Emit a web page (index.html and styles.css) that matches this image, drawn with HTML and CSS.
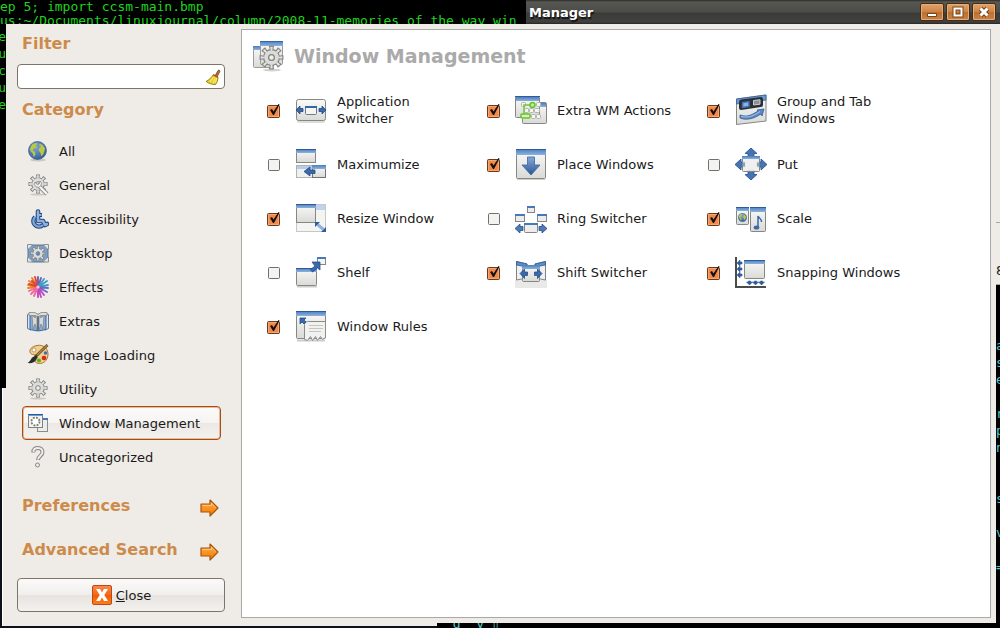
FILE: index.html
```html
<!DOCTYPE html>
<html lang="en">
<head>
    <meta charset="UTF-8">
    <meta name="viewport" content="width=device-width, initial-scale=1.0">
    <title>CompizConfig Settings Manager</title>
    <link rel="stylesheet" href="styles.css">
</head>
<body>
    <!-- Shared gradients and shapes -->
    <svg class="defs" width="0" height="0" aria-hidden="true">
        <defs>
            <linearGradient id="face" x1="0" y1="0" x2="0" y2="1"><stop offset="0" stop-color="#fafaf9"/><stop offset="1" stop-color="#d9d9d6"/></linearGradient>
            <linearGradient id="bar" x1="0" y1="0" x2="0" y2="1"><stop offset="0" stop-color="#4a7ebc"/><stop offset="1" stop-color="#8db2dd"/></linearGradient>
            <linearGradient id="blue" x1="0" y1="0" x2="0" y2="1"><stop offset="0" stop-color="#86a9d6"/><stop offset="1" stop-color="#2a5596"/></linearGradient>
            <linearGradient id="orange" x1="0" y1="0" x2="0" y2="1"><stop offset="0" stop-color="#ffb04a"/><stop offset="1" stop-color="#f57900"/></linearGradient>
            <linearGradient id="red" x1="0" y1="0" x2="0" y2="1"><stop offset="0" stop-color="#f98a50"/><stop offset="0.5" stop-color="#f2661c"/><stop offset="0.5" stop-color="#f45a00"/><stop offset="1" stop-color="#ff7d1a"/></linearGradient>
            <radialGradient id="sea" cx="0.4" cy="0.3" r="0.8"><stop offset="0" stop-color="#7fa8d8"/><stop offset="1" stop-color="#2c5793"/></radialGradient>
        </defs>
        <symbol id="gear" viewBox="0 0 20 20">
            <circle cx="10" cy="10" r="7.6" fill="none" stroke="#80827e" stroke-width="4" pathLength="80" stroke-dasharray="5.6 4.4" stroke-dashoffset="2.8"/>
            <circle cx="10" cy="10" r="6.8" fill="#80827e"/>
            <circle cx="10" cy="10" r="7.2" fill="none" stroke="#e4e5e2" stroke-width="3" pathLength="80" stroke-dasharray="3 7" stroke-dashoffset="1.5"/>
            <circle cx="10" cy="10" r="5.9" fill="#dcddda"/>
            <circle cx="10" cy="10" r="2.3" fill="#eeeeec" stroke="#80827e"/>
        </symbol>
        <symbol id="globe" viewBox="0 0 20 20">
            <circle cx="10" cy="10" r="9.4" fill="url(#sea)" stroke="#2f5688" stroke-width="0.8"/>
            <path d="M3 6l2-3 4-1 1 1-2 2 1 2-3 1-1 2 2 1 1 3-2 3-1-4-2-2-1-2zM12 3l3 1 3 4-1 3-1 3-2 2-1-4-2-2 1-3 2-1-2-1z" fill="#bcc83f"/>
        </symbol>
        <symbol id="next" viewBox="0 0 20 18">
            <path d="M1 5h9V1l8 8-8 8v-4H1z" fill="url(#orange)" stroke="#a8560b" stroke-width="1.2" stroke-linejoin="round"/>
            <path d="M2.5 6.5h9V4l4 4.5" fill="none" stroke="#ffc888" stroke-width="0.9"/>
        </symbol>
    </svg>

    <div class="desktop">
        <header class="titlebar">
            <h1>Manager</h1>
            <div class="window-buttons">
                <button type="button" aria-label="Minimize"><svg viewBox="0 0 14 14"><path d="M2.5 8.500h9v3h-9z" fill="#fff" stroke="#7b4417"/></svg></button>
                <button type="button" aria-label="Maximize"><svg viewBox="0 0 14 14"><path d="M3.500 3.500h7v7h-7z" fill="none" stroke="#7b4417" stroke-width="4"/><path d="M3.500 3.500h7v7h-7z" fill="none" stroke="#fff" stroke-width="2"/></svg></button>
                <button type="button" aria-label="Close window"><svg viewBox="0 0 14 14"><path d="M3.500 3.500l7 7M10.500 3.500l-7 7" stroke="#7b4417" stroke-width="5"/><path d="M3.500 3.500l7 7M10.500 3.500l-7 7" stroke="#fff" stroke-width="3"/></svg></button>
            </div>
        </header>

        <div class="window">
            <aside class="sidebar">
                <label class="heading" for="filter">Filter</label>
                <div class="filter-box">
                    <input type="text" id="filter">
                    <button type="button" class="clear-btn" aria-label="Clear filter">
                        <svg viewBox="0 0 16 16">
                            <path d="M10 7 13 1.500c.6-1 2.300 0 1.800 1L12 8z" fill="#b5733a" stroke="#6b3f16" stroke-width="0.8"/>
                            <path d="M8.500 5.500 13 8c0 3-1 5.500-2.500 7.500C7 15.500 4 14.500 1 12.500c3-1.500 5.500-4 7.500-7z" fill="#e6cf2c" stroke="#8c7a08" stroke-width="0.9"/>
                            <path d="M8.500 8 5 13M10 9l-2 5.500M11.500 9l-1 5" stroke="#fff38a" stroke-width="0.9"/>
                            <path d="M8.500 6 12.700 8.300" stroke="#c33b1c" stroke-width="1.200"/>
                        </svg>
                    </button>
                </div>

                <h2 class="heading category-heading">Category</h2>
                <ul class="category-list">
                    <li><button type="button"><svg viewBox="0 0 22 22"><ellipse cx="11" cy="20" rx="8" ry="1.500" fill="#cbc8c2"/><use href="#globe" x="1" y="1" width="19" height="19"/></svg>All</button></li>
                    <li><button type="button"><svg viewBox="0 0 22 22"><ellipse cx="11" cy="20.500" rx="8" ry="1" fill="#cbc8c2"/><use href="#gear" x="1" y="0" width="20" height="20"/><path d="M10 10l10 10" stroke="#8a8c88" stroke-width="4"/><path d="M10 10l10 10" stroke="#f5f5f4" stroke-width="2.400"/><path d="M8 8a3.500 3.500 0 1 0 5-1l-1 3-2 .500z" fill="#eee" stroke="#8a8c88" stroke-width="0.8"/></svg>General</button></li>
                    <li><button type="button"><svg viewBox="0 0 22 22"><path d="M8 9a5.500 5.500 0 1 0 8 8" fill="none" stroke="#1f4379" stroke-width="4.400"/><path d="M11 3.500V13h5l2 4 2-1" fill="none" stroke="#1f4379" stroke-width="4.600" stroke-linejoin="round" stroke-linecap="round"/><path d="M11 7h4" stroke="#1f4379" stroke-width="4"/><path d="M8 9a5.500 5.500 0 1 0 8 8" fill="none" stroke="#7ea6da" stroke-width="2.400"/><path d="M11 3.500V13h5l2 4 2-1" fill="none" stroke="#8db2e2" stroke-width="2.600" stroke-linejoin="round" stroke-linecap="round"/><path d="M11 7h3.500" stroke="#8db2e2" stroke-width="2"/></svg>Accessibility</button></li>
                    <li><button type="button"><svg viewBox="0 0 22 22"><rect x="1" y="3" width="20" height="17" rx="5" fill="#7f9fc2" stroke="#59748f"/><path d="M.500 7.500v-5h5M16.500 2.500h5v5M21.500 15v5h-5M5.500 20h-5v-5" fill="#e5e5e2" stroke="#8e908c"/><use href="#gear" x="3" y="3.500" width="16" height="16"/><circle cx="11" cy="11.500" r="2" fill="#6486ad"/></svg>Desktop</button></li>
                    <li><button type="button"><svg viewBox="0 0 22 22"><g stroke-width="1.900" stroke-linecap="round"><path d="M11 11 1 9M11 11 2 5M11 11 5 2M11 11 1 12" stroke="#ee8422"/><path d="M11 11 8 1M11 11 5 5M11 11 2 8" stroke="#dc4638"/><path d="M11 11 11 1M11 11 14 2M11 11 13 5" stroke="#7260b6"/><path d="M11 11 17 3M11 11 20 5M11 11 21 9M11 11 17 7" stroke="#3c9ec3"/><path d="M11 11 21 12M11 11 20 16" stroke="#6b68c4"/><path d="M11 11 17 19M11 11 14 21M11 11 11 21" stroke="#c046c4"/><path d="M11 11 7 20M11 11 4 18M11 11 2 15" stroke="#ec6a9c"/></g><circle cx="11" cy="11" r="1.600" fill="#f8c9dc"/></svg>Effects</button></li>
                    <li><button type="button"><svg viewBox="0 0 22 22"><path d="M.500 4.500 4 3v17l-3.500-1.500zM21.500 4.500 18 3v17l3.500-1.500z" fill="#dfe4ea" stroke="#64788e"/><path d="M3 4h7.500v17L3 19.500zM19 4h-7.500v17L19 19.500z" fill="#86ade0" stroke="#3f679f"/><path d="M5 5 8 8l2-4v16l-2-6-2 5zM17 5l-3 3-2-4v16l2-6 2 5z" fill="#d9dad7" stroke="#83857f" stroke-width="0.8"/><path d="M2 2.500h6l3 2 3-2h6v3h-6l-3 1-3-1H2z" fill="#dedfdc" stroke="#838883" stroke-width="0.8"/></svg>Extras</button></li>
                    <li><button type="button"><svg viewBox="0 0 22 22"><path d="M10 1.500c7-1.500 11.500 4 11 9.500-.5 6-5 8.500-8.500 8.500-4 0-5-2-3-4.500 2-3-1-4.500-4-4.500C1 9 2 3 10 1.500z" fill="#f0cf91" stroke="#a9762b"/><circle cx="7" cy="6" r="2" fill="#fff" stroke="#b88a45" stroke-width="0.8"/><circle cx="18.500" cy="9" r="1.800" fill="#3c6fbe"/><circle cx="17" cy="14" r="2.300" fill="#d32a1e"/><circle cx="12" cy="16.500" r="2" fill="#59ad1f"/><path d="M20.500 1 8 13" stroke="#5e4720" stroke-width="2.800"/><path d="M20.500 1 10 11" stroke="#b88b45" stroke-width="1.200"/><path d="M9 11.500 6 13c-2 1-2 4-5.500 6C4 19.500 8 19 9 15.500l1.500-2z" fill="#2b2b2b"/></svg>Image Loading</button></li>
                    <li><button type="button"><svg viewBox="0 0 22 22"><ellipse cx="11" cy="20.500" rx="8" ry="1" fill="#cbc8c2"/><use href="#gear" x="1" y="0" width="20" height="20"/></svg>Utility</button></li>
                    <li><button type="button" class="active"><svg viewBox="0 0 22 22"><rect x="10.500" y="6.500" width="10" height="13" fill="#ececea" stroke="#8b8d89"/><path d="M10 6.500h11M10 7.500h11" stroke="#4477b8"/><rect x="1.500" y="2.500" width="14" height="13" fill="#f2f2f0" stroke="#80827e"/><path d="M1 2.500h15" stroke="#2d589b"/><path d="M1 3.500h15" stroke="#6f9bd0"/><circle cx="8.500" cy="9.500" r="4" fill="#fff" stroke="#777974" stroke-width="1.800" stroke-dasharray="1.900 1.240"/></svg>Window Management</button></li>
                    <li><button type="button"><svg viewBox="0 0 22 22"><path d="M6.500 6.500C6 3 8.500 2 11 2c3 0 4.500 2 4.500 4 0 4-4.500 4-4.500 8" fill="none" stroke="#858782" stroke-width="4"/><path d="M6.500 6C6 3 8.500 2 11 2c3 0 4.500 2 4.500 4 0 4-4.500 4-4.500 7.500" fill="none" stroke="#efefed" stroke-width="2"/><circle cx="10.500" cy="19" r="2" fill="#efefed" stroke="#858782"/></svg>Uncategorized</button></li>
                </ul>

                <button type="button" class="link-row heading">Preferences <svg viewBox="0 0 20 18"><use href="#next"/></svg></button>
                <button type="button" class="link-row heading">Advanced Search <svg viewBox="0 0 20 18"><use href="#next"/></svg></button>

                <button type="button" class="close-btn">
                    <svg viewBox="0 0 22 22"><rect x="1.500" y="1.500" width="19" height="19" rx="1.500" fill="url(#red)" stroke="#bd4a12"/><path d="M5 5h4l2 3.500L13 5h4l-3.700 6 3.700 6h-4l-2-3.500L9 17H5l3.700-6z" fill="#fff"/></svg>
                    <span><u>C</u>lose</span>
                </button>
            </aside>

            <main class="panel">
                <div class="panel-header">
                    <svg viewBox="0 0 32 32">
                        <rect x=".500" y="6.500" width="20" height="21" rx="1" fill="url(#face)" stroke="#9b9d99"/><path d="M0 6h20v4H0z" fill="url(#bar)"/>
                        <rect x="7.500" y="1.500" width="22" height="23" rx="1" fill="url(#face)" stroke="#9b9d99"/><path d="M7 1h23v5H7z" fill="url(#bar)"/><path d="M7 1.500h23" stroke="#3465a4"/>
                        <ellipse cx="19" cy="30" rx="9" ry="1.500" fill="#d3d3d1"/><use href="#gear" x="6" y="5" width="25" height="25"/>
                    </svg>
                    <h2>Window Management</h2>
                </div>

                <div class="plugin-grid">
                    <div class="plugin">
                        <input type="checkbox" id="switcher" checked>
                        <label for="switcher">
                            <svg viewBox="0 0 32 32"><rect x="2" y="25" width="28" height="4" rx="2" fill="#ddd"/><rect x="1.500" y="5.500" width="29" height="21" rx="2" fill="url(#face)" stroke="#858782"/><rect x="10.500" y="12.500" width="11" height="8" rx="1" fill="#f4f4f3" stroke="#6c7a8c"/><path d="M10 13h12" stroke="#3465a4" stroke-width="2"/><path d="M1 16l4-4v2.500h3v3H5V20zM31 16l-4-4v2.500h-3v3h3V20z" fill="#3c69a8" stroke="#204a87" stroke-width="0.8"/></svg>
                            <span>Application Switcher</span>
                        </label>
                    </div>
                    <div class="plugin">
                        <input type="checkbox" id="extrawm" checked>
                        <label for="extrawm">
                            <svg viewBox="0 0 32 32"><rect x="7.500" y="8.500" width="24" height="21" rx="1" fill="url(#face)" stroke="#858782"/><path d="M8 9h23v4H8z" fill="url(#bar)"/><rect x=".500" y="2.500" width="24" height="21" rx="1" fill="url(#face)" stroke="#858782"/><path d="M1 3h23v4H1z" fill="url(#bar)"/><path d="M0 2.500h25" stroke="#2f5b9c"/><path d="M7 22h19v3H7z" fill="#e8e8e6"/><g fill="#f5f5f4" stroke="#b1b3ae"><rect x="6.500" y="8.500" width="4" height="4" rx="1"/><rect x="21.500" y="8.500" width="4" height="4" rx="1"/><rect x="9.500" y="14.500" width="4" height="4" rx="1"/><rect x="14.500" y="14.500" width="4" height="4" rx="1"/><rect x="19.500" y="14.500" width="5" height="4" rx="1"/><rect x="16.500" y="20.500" width="4" height="4" rx="1"/><rect x="21.500" y="20.500" width="4" height="4" rx="1"/></g><path d="M9 20v-9h8" fill="none" stroke="#73c83b" stroke-width="1.500"/><rect x="6" y="20" width="9" height="4" rx="1" fill="#d2f5b5" stroke="#69c12f" stroke-width="1.500"/><circle cx="17.500" cy="11" r="2.500" fill="#b9ed90" stroke="#69c12f" stroke-width="1.500"/></svg>
                            <span>Extra WM Actions</span>
                        </label>
                    </div>
                    <div class="plugin">
                        <input type="checkbox" id="group" checked>
                        <label for="group">
                            <svg viewBox="0 0 32 32"><path d="M1.500 5 31 1v26L1.500 30.500z" fill="url(#face)" stroke="#858782"/><path d="M1.500 5 31 1v5L1.500 10z" fill="#6d9ad0" stroke="#31609f" stroke-width="0.8"/><path d="M6 5.500 26 3q2 0 2 2v6q0 2-2 2L6 16q-2 0-2-2V8q0-2 2-2.500z" fill="#2b3038"/><path d="M7.500 8.500 14 7.500v5l-6.500 1z" fill="#8db2dd" stroke="#3c70b1" stroke-width="1.500"/><path d="M18.500 6.500 25 5.700v4.500l-6.500.8z" fill="#8b9199" stroke="#c9ccd0"/><path d="M5 21c8 3 13-1 18-4l-1-1 7-1-2 7-1-2c-6 4-14 7-21 4z" fill="#5c88c4" stroke="#2f5b9c" stroke-width="0.8"/><path d="M6 22.500c9 2 14-2 19-5" fill="none" stroke="#a6c5ea"/></svg>
                            <span>Group and Tab Windows</span>
                        </label>
                    </div>
                    <div class="plugin">
                        <input type="checkbox" id="maximumize">
                        <label for="maximumize">
                            <svg viewBox="0 0 32 32"><rect x="1.500" y="1.500" width="19" height="13" fill="url(#face)" stroke="#858782"/><path d="M1 1h20v4H1z" fill="url(#bar)"/><path d="M1 1.500h20" stroke="#2f5b9c"/><rect x="1.500" y="17.500" width="29" height="12" fill="#f0f0ef" stroke="#b1b3b0"/><path d="M2 18h15v3H2z" fill="#b5cdea"/><rect x="17.500" y="17.500" width="13" height="12" fill="url(#face)" stroke="#71737a"/><path d="M17 17h14v4H17z" fill="url(#bar)"/><path d="M9 23.500 15 19v3h5v3.500h-5V28z" fill="#3a68a9" stroke="#234a85" stroke-width="0.8"/></svg>
                            <span>Maximumize</span>
                        </label>
                    </div>
                    <div class="plugin">
                        <input type="checkbox" id="place" checked>
                        <label for="place">
                            <svg viewBox="0 0 32 32"><path d="M2 31.500h28" stroke="#ccc"/><rect x="1.500" y="1.500" width="29" height="29" rx="1" fill="url(#face)" stroke="#858782"/><path d="M1 1h30v6H1z" fill="url(#bar)"/><path d="M1 1.500h30" stroke="#2f5b9c"/><path d="M12.500 9v8H7l9 10 9-10h-5.500V9z" fill="url(#blue)" stroke="#3a649f" stroke-width="0.8"/></svg>
                            <span>Place Windows</span>
                        </label>
                    </div>
                    <div class="plugin">
                        <input type="checkbox" id="put">
                        <label for="put">
                            <svg viewBox="0 0 32 32"><path d="M16 0l6 5.500h-3V9h-6V5.500h-3zM16 32l6-5.500h-3V22h-6v4.500h-3zM0 16.500 6 11v3h4v5H6v3zM32 16.500 26 11v3h-4v5h4v3z" fill="#4673b1" stroke="#234e8a" stroke-width="0.8"/><rect x="7.500" y="8.500" width="17" height="15" rx="1" fill="#eeeeed" fill-opacity="0.900" stroke="#858782"/><path d="M7 8h18v3H7z" fill="url(#bar)"/><path d="M8 14.500h2v4H8zM22 14.500h2v4h-2z" fill="#7fa2cf"/></svg>
                            <span>Put</span>
                        </label>
                    </div>
                    <div class="plugin">
                        <input type="checkbox" id="resize" checked>
                        <label for="resize">
                            <svg viewBox="0 0 32 32"><rect x="1.500" y="2.500" width="29" height="27" fill="#f4f4f3" stroke="#c6c8c4"/><path d="M2 3h28v5H2z" fill="#bdd3ee"/><rect x="1.500" y="2.500" width="19" height="18" fill="url(#face)" stroke="#858782"/><path d="M1 2h20v4H1z" fill="url(#bar)"/><path d="M1 2.500h20" stroke="#2f5b9c"/><path d="M22.500 22.500l6 5" stroke="#8fb0da" stroke-width="3"/><path d="M20 20h5l-5 5zM31 30v-5l-5 5z" fill="#2f5b9c"/></svg>
                            <span>Resize Window</span>
                        </label>
                    </div>
                    <div class="plugin">
                        <input type="checkbox" id="ring">
                        <label for="ring">
                            <svg viewBox="0 0 32 32"><g fill="#ececea" stroke="#858782"><rect x="12.500" y="4.500" width="7" height="6"/><rect x=".500" y="12.500" width="9" height="7"/><rect x="22.500" y="12.500" width="9" height="7"/><rect x="9.500" y="21.500" width="13" height="9" rx="1"/></g><path d="M12 5h8M0 13h10M22 13h10M9 22h14" stroke="#4679ba" stroke-width="2"/><path d="M0 26.500 5 22v2.500h3v4H5V31zM32 26.500 27 22v2.500h-3v4h3V31z" fill="#4f7bb7" stroke="#234e8a" stroke-width="0.8"/></svg>
                            <span>Ring Switcher</span>
                        </label>
                    </div>
                    <div class="plugin">
                        <input type="checkbox" id="scale" checked>
                        <label for="scale">
                            <svg viewBox="0 0 32 32"><rect x="1.500" y="5.500" width="12" height="17" rx="1" fill="url(#face)" stroke="#858782"/><path d="M1 5h13v4H1z" fill="url(#bar)"/><use href="#globe" x="3" y="11" width="9" height="9"/><rect x="15.500" y="5.500" width="15" height="24" rx="1" fill="url(#face)" stroke="#858782"/><path d="M15 5h16v5H15z" fill="url(#bar)"/><path d="M1 5.500h13M15 5.500h16" stroke="#2f5b9c"/><path d="M23 25V14c1 3 4 2.500 3.500 6" fill="none" stroke="#3a68a9" stroke-width="1.500"/><ellipse cx="21.500" cy="25.500" rx="2.800" ry="2" fill="#3a68a9"/></svg>
                            <span>Scale</span>
                        </label>
                    </div>
                    <div class="plugin">
                        <input type="checkbox" id="shelf">
                        <label for="shelf">
                            <svg viewBox="0 0 32 32"><path d="M2 30.500h20" stroke="#ccc" stroke-width="2"/><rect x="1.500" y="12.500" width="20" height="17" rx="1" fill="url(#face)" stroke="#858782"/><path d="M1 12h21v4H1z" fill="url(#bar)"/><path d="M1 12.500h21" stroke="#2f5b9c"/><rect x="22.500" y="1.500" width="8" height="7" fill="#f4f4f3" stroke="#858782"/><path d="M22 2h9" stroke="#4679ba" stroke-width="2"/><path d="M25 6v8l-2.500-2-5 4-2-2.500 4.500-3.500-3-4z" fill="#3a68a9" stroke="#234e8a" stroke-width="0.8"/></svg>
                            <span>Shelf</span>
                        </label>
                    </div>
                    <div class="plugin">
                        <input type="checkbox" id="shift" checked>
                        <label for="shift">
                            <svg viewBox="0 0 32 32"><path d="M0 24h32v8H0z" fill="#e9e9e8"/><path d="M1.500 5.500 12 8v14L1.500 24zM30.500 5.500 20 8v14l10.500 2z" fill="#f0f0ef" stroke="#7d8187"/><path d="M1.500 5.500 12 8v3L1.500 9zM30.500 5.500 20 8v3l10.500-2z" fill="#5d8cc8" stroke="#2f5b9c" stroke-width="0.8"/><rect x="7.500" y="9.500" width="17" height="16" rx="1" fill="url(#face)" stroke="#858782"/><path d="M7 9h18v4H7z" fill="url(#bar)"/><path d="M5 17.500 9.500 13v3h3v3.500h-3v3zM27 17.500 22.500 13v3h-3v3.500h3v3z" fill="#3a68a9" stroke="#234e8a" stroke-width="0.8"/></svg>
                            <span>Shift Switcher</span>
                        </label>
                    </div>
                    <div class="plugin">
                        <input type="checkbox" id="snap" checked>
                        <label for="snap">
                            <svg viewBox="0 0 32 32"><path d="M1 1v30h30" fill="none" stroke="#4a4c49" stroke-width="2"/><rect x="9.500" y="4.500" width="20" height="18" rx="1" fill="url(#face)" stroke="#858782"/><path d="M9 4h21v4H9z" fill="url(#bar)"/><path d="M9 4.500h21" stroke="#2f5b9c"/><path d="M2 7l3-3v2h2v2H5v2zM2 13l3-3v2h2v2H5v2zM2 19l3-3v2h2v2H5v2zM14.500 29l-3-3h2v-1h2v1h2zM20.500 29l-3-3h2v-1h2v1h2zM26.500 29l-3-3h2v-1h2v1h2z" fill="#2f5b9c" stroke="#2f5b9c" stroke-width="0.6"/></svg>
                            <span>Snapping Windows</span>
                        </label>
                    </div>
                    <div class="plugin">
                        <input type="checkbox" id="rules" checked>
                        <label for="rules">
                            <svg viewBox="0 0 32 32"><path d="M2 30.500h28" stroke="#ccc" stroke-width="2"/><rect x="1.500" y="1.500" width="29" height="27" rx="1" fill="url(#face)" stroke="#858782"/><path d="M1 1h30v5H1z" fill="url(#bar)"/><path d="M1 1.500h30" stroke="#2f5b9c"/><path d="M9.500 29.500v-15q0-3 3-3h18v16l-3 2-2-3-3 4-2-4-3 4-2-4-3 4z" fill="#f1f1ef" stroke="#8b8d89"/><path d="M14 15.500h14M14 18.500h14M14 21.500h12" stroke="#c5c6c2"/><path d="M5 8h6l-2 2 2 2-2 2-2-2-2 2z" fill="#3a68a9" stroke="#234e8a" stroke-width="0.8"/></svg>
                            <span>Window Rules</span>
                        </label>
                    </div>
                </div>
            </main>
        </div>

        <!-- Terminals and windows peeking out around the edges -->
        <pre class="terminal terminal-top">ep 5; import ccsm-main.bmp
us:~/Documents/linuxjournal/column/2008-11-memories of the way win</pre>
        <pre class="terminal terminal-left">e
u
c
u
e</pre>
        <pre class="terminal terminal-right">a
s
e

r
p
n


s

v

=</pre>
        <pre class="terminal terminal-bottom">  g  y ▯</pre>
        <div class="other-window">8</div>
    </div>
</body>
</html>
```
FILE: styles.css
```css
/* General Styles */
* {
    margin: 0;
    padding: 0;
    box-sizing: border-box;
}

body {
    font-family: 'DejaVu Sans', sans-serif;
    font-size: 13px;
    line-height: 17px;
    color: #1a1a1a;
}

button {
    font: inherit;
    color: inherit;
    border: none;
    background: none;
    cursor: pointer;
}

svg {
    display: block;
    flex-shrink: 0;
}

.defs {
    position: absolute;
}

.desktop {
    position: relative;
    display: flex;
    flex-direction: column;
    min-height: 100vh;
    padding: 0 0 2px 2px;
    background: #0c111c;
    overflow: hidden;
}

/* Title bar */
.titlebar {
    display: flex;
    align-items: center;
    justify-content: space-between;
    height: 24px;
    padding: 0 4px 0 527px;
    background: linear-gradient(#2c2c2a, #575852 2px, #4b4b48 12px, #3b3b39 13px, #40403e 22px, #252523);
}

.titlebar h1 {
    font-size: 13px;
    color: #fff;
    text-shadow: 1px 2px 1px #111;
}

.window-buttons {
    display: flex;
    gap: 2px;
}

.window-buttons button {
    width: 24px;
    height: 18px;
    padding: 1px 4px;
    border: 1px solid #4b2a10;
    border-radius: 2px;
    background: linear-gradient(#e0a36c, #cd8444 50%, #b96f31 50%, #c98347);
    box-shadow: inset 0 0 0 1px #e3ad7b;
}

.window-buttons svg {
    width: 14px;
    height: 14px;
}

/* Window */
.window {
    flex: 1;
    display: grid;
    grid-template-columns: 208px 1fr;
    gap: 16px;
    padding: 5px 9px 8px 14px;
    border-left: 1px solid #fff;
    background: #efebe7;
}

.sidebar {
    display: flex;
    flex-direction: column;
}

.heading {
    padding-left: 5px;
    font-size: 16px;
    font-weight: bold;
    line-height: 20px;
    color: #cc8b4b;
}

.sidebar label.heading {
    margin-top: 5px;
}

.filter-box {
    display: flex;
    align-items: center;
    height: 25px;
    margin-top: 10px;
    padding: 0 3px;
    border: 1px solid #7d756b;
    border-radius: 4px;
    background: #fff;
}

.filter-box input {
    flex: 1;
    min-width: 0;
    border: none;
    outline: none;
    font: inherit;
}

.clear-btn svg {
    width: 16px;
    height: 16px;
}

.category-heading {
    margin-top: 11px;
}

.category-list {
    list-style: none;
    margin: 14px 4px 0 5px;
}

.category-list button {
    display: flex;
    align-items: center;
    gap: 10px;
    width: 100%;
    height: 34px;
    padding: 0 4px;
    border: 1px solid transparent;
    border-radius: 4px;
    text-align: left;
}

.category-list svg {
    width: 22px;
    height: 22px;
}

.category-list .active {
    border-color: #a14e1f;
    background: linear-gradient(#fcfbfa, #f6f4f2 50%, #ebe8e4 50%, #f4f2f0);
    box-shadow: inset 0 0 0 1px #f0b990;
}

.link-row {
    display: flex;
    align-items: center;
    justify-content: space-between;
    height: 44px;
    padding-right: 5px;
}

.category-list + .link-row {
    margin-top: 10px;
}

.link-row svg {
    width: 20px;
    height: 18px;
    margin-top: 4px;
}

.close-btn {
    display: flex;
    align-items: center;
    justify-content: center;
    gap: 3px;
    height: 34px;
    margin-top: 6px;
    border: 1px solid #7d756b;
    border-radius: 4px;
    background: linear-gradient(#fbfaf9, #f1efec 50%, #e6e3df 50%, #f3f1ee);
}

.close-btn svg {
    width: 22px;
    height: 22px;
}

/* Plugin panel */
.panel {
    padding: 10px 0 10px 11px;
    border: 1px solid #a9a9a6;
    background: #fff;
}

.panel-header {
    display: flex;
    align-items: center;
    gap: 9px;
}

.panel-header svg {
    width: 32px;
    height: 32px;
}

.panel-header h2 {
    font-size: 19px;
    line-height: 24px;
    color: #aaa;
}

.plugin-grid {
    display: grid;
    grid-template-columns: repeat(auto-fill, 220px);
    grid-auto-rows: 54px;
    margin-top: 11px;
    padding-left: 13px;
}

.plugin {
    display: flex;
    align-items: center;
    gap: 13px;
}

.plugin input {
    appearance: none;
    width: 16px;
    height: 16px;
    background: url("data:image/svg+xml,%3Csvg xmlns='http://www.w3.org/2000/svg' viewBox='0 0 16 16'%3E%3Crect x='2.500' y='3.500' width='11' height='11' rx='1' fill='%23f3f3f2' stroke='%23716e6b'/%3E%3C/svg%3E");
}

.plugin input:checked {
    background: url("data:image/svg+xml,%3Csvg xmlns='http://www.w3.org/2000/svg' viewBox='0 0 16 16'%3E%3Crect x='1.500' y='3.500' width='12' height='12' rx='1' fill='%23f08a4b' stroke='%23693a1e'/%3E%3Cpath d='M2.500 4.500h10v10h-10z' fill='none' stroke='%23f9a570'/%3E%3Cpath d='M4 8l2-1 1.500 2.500L12.500 2l1 .5L8 13H7z' fill='%23111'/%3E%3C/svg%3E");
}

.plugin label {
    display: flex;
    align-items: center;
    gap: 10px;
}

.plugin label svg {
    width: 32px;
    height: 32px;
}

.plugin label span {
    max-width: 128px;
}

/* Things behind the window */
.terminal {
    position: absolute;
    overflow: hidden;
    background: #000;
    color: #1ed41e;
    font: 13px/17px 'DejaVu Sans Mono', monospace;
}

.terminal-top {
    top: 0;
    left: 0;
    width: 526px;
    height: 24px;
    line-height: 14px;
}

.terminal-left {
    top: 24px;
    left: 0;
    width: 6px;
    height: 364px;
    padding-top: 4px;
    direction: rtl;
}

.terminal-right {
    top: 285px;
    right: 0;
    bottom: 0;
    width: 4px;
    padding-top: 52px;
    color: #4fc9c9;
}

.terminal-bottom {
    left: 437px;
    right: 0;
    bottom: 0;
    height: 5px;
    line-height: 1px;
    color: #4fc9c9;
}

.other-window {
    position: absolute;
    top: 222px;
    right: 0;
    width: 4px;
    height: 63px;
    padding-top: 39px;
    border-top: 1px solid #aaa69f;
    border-bottom: 1px solid #aaa69f;
    background: #efebe7;
    overflow: hidden;
}
```
